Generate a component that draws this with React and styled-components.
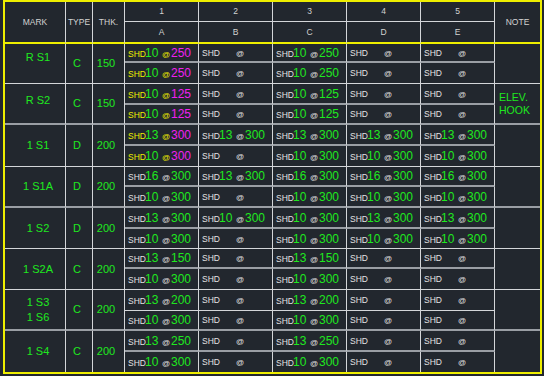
import React from 'react';
import styled, { createGlobalStyle } from 'styled-components';

const C = {
  bg: '#22272e',
  line: '#d4d6d9',
  soft: '#9a9ea4',
  yellow: '#eeee00',
  green: '#1fe81f',
  magenta: '#f020f0',
  text: '#e2e2e2',
  head: '#d2d2d2',
};

const BORDER = {
  white: `1px solid ${C.line}`,
  soft: `2px solid ${C.soft}`,
  yellow: `2px solid ${C.yellow}`,
  none: 'none',
};

const Global = createGlobalStyle`
  html, body { margin: 0; padding: 0; background: ${C.bg}; }
  body { font-family: "Liberation Sans", Arial, sans-serif; }
`;

const Sheet = styled.div`
  display: grid;
  width: 539px;
  margin-left: 3px;
  box-sizing: border-box;
  border: 2px solid ${C.yellow};
  grid-template-columns: 61px 27px 32px repeat(5, 74px) 45px;
  grid-template-rows: 20px 22px 19px 21px 21px 20px 21px 21px 20px 21px 21px 20px 20px 21px 21px 20px 21px 20px;
`;

const Cell = styled.div`
  box-sizing: border-box;
  min-width: 0;
  overflow: hidden;
  border-right: ${(p) => (p.$last ? 'none' : `1px solid ${C.line}`)};
  border-bottom: ${(p) => BORDER[p.$bottom || 'white']};
  grid-row: span ${(p) => p.$span || 1};
`;

const HeadCell = styled(Cell)`
  display: flex;
  align-items: center;
  justify-content: center;
  font-size: 8.5px;
  color: ${C.head};
  padding-bottom: 1px;
`;

const GroupCell = styled(Cell)`
  display: flex;
  flex-direction: column;
  align-items: center;
  justify-content: center;
  color: ${C.green};
  font-size: 11px;
  line-height: 15px;
  padding-left: ${(p) => p.$pl || 0}px;
  padding-right: ${(p) => p.$pr || 0}px;
  padding-bottom: ${(p) => p.$lift || 0}px;
  white-space: nowrap;
`;

const NoteCell = styled(Cell)`
  display: flex;
  flex-direction: column;
  justify-content: center;
  padding-left: 4px;
  color: ${C.green};
  font-size: 10.5px;
  line-height: 13px;
  white-space: nowrap;
`;

const RebarCell = styled(Cell)`
  display: flex;
  align-items: center;
  padding-left: 3px;
`;

const Rebar = styled.div`
  display: flex;
  align-items: baseline;
  white-space: nowrap;
`;

const Shd = styled.span`
  display: inline-block;
  width: 17px;
  font-size: 8.5px;
  color: ${(p) => (p.$hi ? C.yellow : C.text)};
`;

const Num = styled.span`
  display: inline-block;
  width: 17px;
  font-size: 12px;
  color: ${C.green};
`;

const At = styled.span`
  display: inline-block;
  width: 9px;
  font-size: 8px;
  color: ${(p) => (p.$hi ? C.yellow : C.text)};
`;

const Val = styled.span`
  font-size: 12px;
  color: ${(p) => (p.$hi ? C.magenta : C.green)};
`;

const e = {};
const r = (n, v, hi) => ({ n, v, hi });

const groups = [
  {
    mark: ['R S1'], type: 'C', thk: '150', lift: 12, note: null,
    rows: [
      [r('10', '250', true), e, r('10', '250'), e, e],
      [r('10', '250', true), e, r('10', '250'), e, e],
    ],
  },
  {
    mark: ['R S2'], type: 'C', thk: '150', lift: 6, note: ['ELEV.', 'HOOK'],
    rows: [
      [r('10', '125', true), e, r('10', '125'), e, e],
      [r('10', '125', true), e, r('10', '125'), e, e],
    ],
  },
  {
    mark: ['1 S1'], type: 'D', thk: '200',
    rows: [
      [r('13', '300', true), r('13', '300'), r('13', '300'), r('13', '300'), r('13', '300')],
      [r('10', '300', true), e, r('10', '300'), r('10', '300'), r('10', '300')],
    ],
  },
  {
    mark: ['1 S1A'], type: 'D', thk: '200',
    rows: [
      [r('16', '300'), r('13', '300'), r('16', '300'), r('16', '300'), r('16', '300')],
      [r('10', '300'), e, r('10', '300'), r('10', '300'), r('10', '300')],
    ],
  },
  {
    mark: ['1 S2'], type: 'D', thk: '200',
    rows: [
      [r('13', '300'), r('10', '300'), r('10', '300'), r('13', '300'), r('13', '300')],
      [r('10', '300'), e, r('10', '300'), r('10', '300'), r('10', '300')],
    ],
  },
  {
    mark: ['1 S2A'], type: 'C', thk: '200',
    rows: [
      [r('13', '150'), e, r('13', '150'), e, e],
      [r('10', '300'), e, r('10', '300'), e, e],
    ],
  },
  {
    mark: ['1 S3', '1 S6'], type: 'C', thk: '200',
    rows: [
      [r('13', '200'), e, r('13', '200'), e, e],
      [r('10', '300'), e, r('10', '300'), e, e],
    ],
  },
  {
    mark: ['1 S4'], type: 'C', thk: '200',
    rows: [
      [r('13', '250'), e, r('13', '250'), e, e],
      [r('10', '300'), e, r('10', '300'), e, e],
    ],
  },
];

// bottom line style for each of the 16 data rows
const rowLines = [
  'soft', 'white', 'soft', 'soft', 'soft', 'white', 'soft', 'soft',
  'soft', 'white', 'soft', 'white', 'white', 'soft', 'soft', 'none',
];

function RebarEntry({ d, bottom }) {
  return (
    <RebarCell $bottom={bottom}>
      <Rebar>
        <Shd $hi={d.hi}>SHD</Shd>
        <Num>{d.n || ''}</Num>
        <At $hi={d.hi}>@</At>
        {d.v && <Val $hi={d.hi}>{d.v}</Val>}
      </Rebar>
    </RebarCell>
  );
}

export default function App() {
  const cols = ['1', '2', '3', '4', '5'];
  const letters = ['A', 'B', 'C', 'D', 'E'];
  return (
    <>
      <Global />
      <Sheet>
        <HeadCell $span={2} $bottom="yellow">MARK</HeadCell>
        <HeadCell $span={2} $bottom="yellow">TYPE</HeadCell>
        <HeadCell $span={2} $bottom="yellow">THK.</HeadCell>
        {cols.map((c) => (
          <HeadCell key={c} $bottom="white">{c}</HeadCell>
        ))}
        <HeadCell $span={2} $bottom="yellow" $last>NOTE</HeadCell>
        {letters.map((l) => (
          <HeadCell key={l} $bottom="yellow">{l}</HeadCell>
        ))}
        {groups.map((g, gi) => {
          const top = rowLines[gi * 2];
          const bottom = rowLines[gi * 2 + 1];
          return (
            <React.Fragment key={gi}>
              <GroupCell $span={2} $bottom={bottom} $pl={6} $lift={g.lift}>
                {g.mark.map((m) => (
                  <span key={m}>{m}</span>
                ))}
              </GroupCell>
              <GroupCell $span={2} $bottom={bottom} $pr={4}>{g.type}</GroupCell>
              <GroupCell $span={2} $bottom={bottom} $pr={5}>{g.thk}</GroupCell>
              {g.rows[0].map((d, i) => (
                <RebarEntry key={`a${i}`} d={d} bottom={top} />
              ))}
              <NoteCell $span={2} $bottom={bottom} $last>
                {g.note && g.note.map((n) => <span key={n}>{n}</span>)}
              </NoteCell>
              {g.rows[1].map((d, i) => (
                <RebarEntry key={`b${i}`} d={d} bottom={bottom} />
              ))}
            </React.Fragment>
          );
        })}
      </Sheet>
    </>
  );
}
